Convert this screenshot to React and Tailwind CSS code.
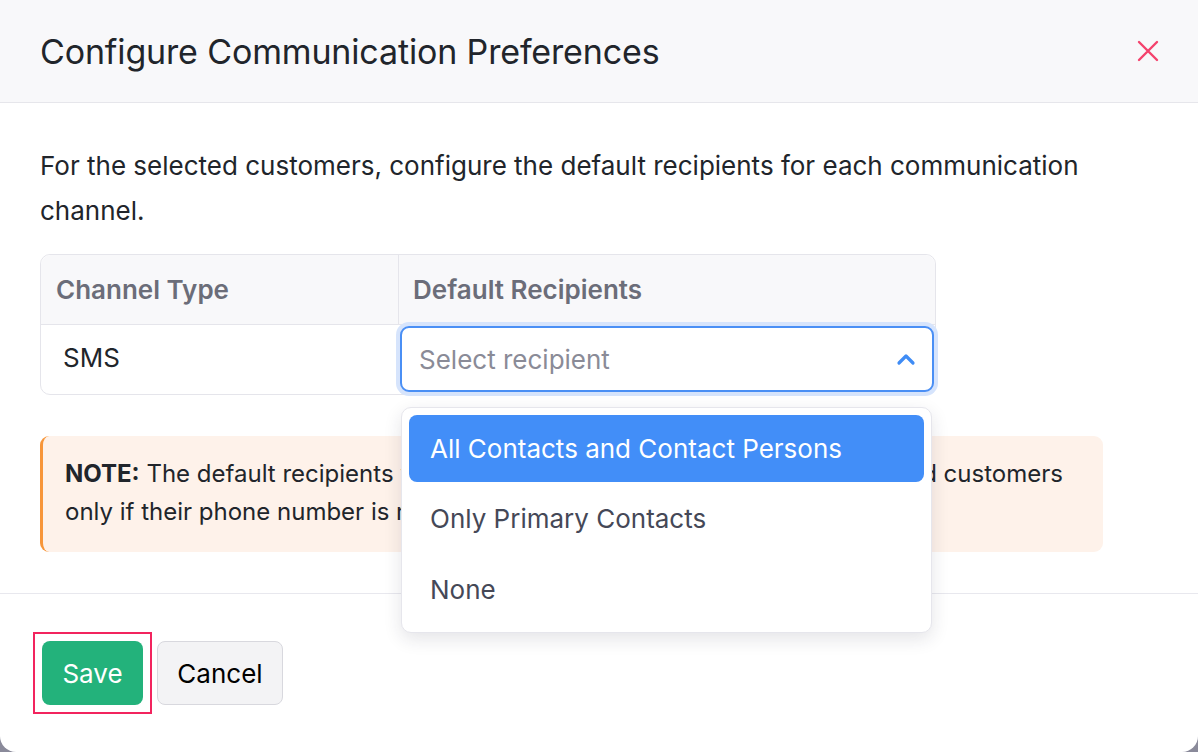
import React from "react";

export default function App() {
  return (
    <div
      className="w-[1198px] h-[752px] bg-[#8a8a9a] overflow-hidden"
      style={{ fontFamily: "Inter, 'Noto Sans', sans-serif" }}
    >
      <div className="relative w-full h-full bg-white rounded-b-[16px] flex flex-col">
        {/* Header */}
        <div className="h-[103px] shrink-0 bg-[#f8f8fa] border-b border-[#e6e6eb] flex items-center justify-between pl-[40px] pr-[38px]">
          <h1 className="text-[34px] text-[#21252b] tracking-[-0.15px]">Configure Communication Preferences</h1>
          <svg width="24" height="24" viewBox="0 0 24 24" className="text-[#f4426c]">
            <path d="M3 3L21 21M21 3L3 21" stroke="currentColor" strokeWidth="2.4" strokeLinecap="round" />
          </svg>
        </div>

        {/* Body */}
        <div className="px-[40px] pt-[40px] pb-[41px] border-b border-[#e8e8ee]">
          <p className="text-[26px] leading-[45px] text-[#21252b]">
            For the selected customers, configure the default recipients for each communication channel.
          </p>

          <div className="mt-[21px] w-[896px] border border-[#e5e5eb] rounded-[10px] overflow-visible">
            <div className="grid grid-cols-[358px_1fr] bg-[#f8f8fa] rounded-t-[10px] border-b border-[#e5e5eb] h-[70px]">
              <div className="flex items-center pl-[15px] border-r border-[#e5e5eb] text-[26px] font-semibold text-[#6b6d79]">
                Channel Type
              </div>
              <div className="flex items-center pl-[14px] text-[26px] font-semibold text-[#6b6d79]">
                Default Recipients
              </div>
            </div>
            <div className="grid grid-cols-[358px_1fr] h-[69px]">
              <div className="flex items-center pl-[22px] text-[26px] text-[#21252b] -mt-[5px]">SMS</div>
              <div className="relative pl-[1px] pt-[1px] pr-[1px]">
                <div className="h-[66px] rounded-[9px] border-2 border-[#4a8ff5] ring-4 ring-[#d6e4fc] bg-white flex items-center justify-between pl-[17px] pr-[16px]">
                  <span className="text-[26px] text-[#8a8b97]">Select recipient</span>
                  <svg width="20" height="14" viewBox="0 0 20 14">
                    <path d="M3 11L10 4L17 11" fill="none" stroke="#3f8cf5" strokeWidth="3.2" strokeLinecap="round" strokeLinejoin="round" />
                  </svg>
                </div>

                {/* Dropdown */}
                <div className="absolute z-10 left-[2px] top-[82px] w-[531px] h-[226px] bg-white border border-[#e6e6ec] rounded-[10px] shadow-[0_6px_18px_rgba(30,30,60,0.12)] p-[7px] flex flex-col">
                  <div className="h-[67px] shrink-0 rounded-[8px] bg-[#428ef8] flex items-center pl-[21px] text-[26px] text-white">
                    All Contacts and Contact Persons
                  </div>
                  <div className="h-[72px] shrink-0 flex items-center pl-[21px] text-[26px] text-[#454857]">
                    Only Primary Contacts
                  </div>
                  <div className="h-[70px] shrink-0 flex items-center pl-[21px] text-[26px] text-[#454857]">
                    None
                  </div>
                </div>
              </div>
            </div>
          </div>

          <div className="mt-[41px] w-[1063px] h-[116px] bg-[#fef2ea] rounded-[9px] border-l-[3px] border-[#f7963a] pl-[22px] pt-[19px] text-[24px] leading-[38px] text-[#21252b] whitespace-nowrap overflow-hidden">
            <b className="font-bold">NOTE:</b> The default recipients you have chosen will be applied to the selected customers
            <br />
            only if their phone number is mapped to a contact person.
          </div>
        </div>

        {/* Footer */}
        <div className="pl-[33px] pt-[38px] flex items-center gap-[5px]">
          <div className="border-2 border-[#f2245e] p-[7px]">
            <button className="w-[101px] h-[64px] rounded-[8px] bg-[#23b27b] text-white text-[26px]">Save</button>
          </div>
          <button className="w-[126px] h-[64px] rounded-[8px] bg-[#f3f3f5] border border-[#d8d8de] text-black text-[26px]">
            Cancel
          </button>
        </div>
      </div>
    </div>
  );
}
